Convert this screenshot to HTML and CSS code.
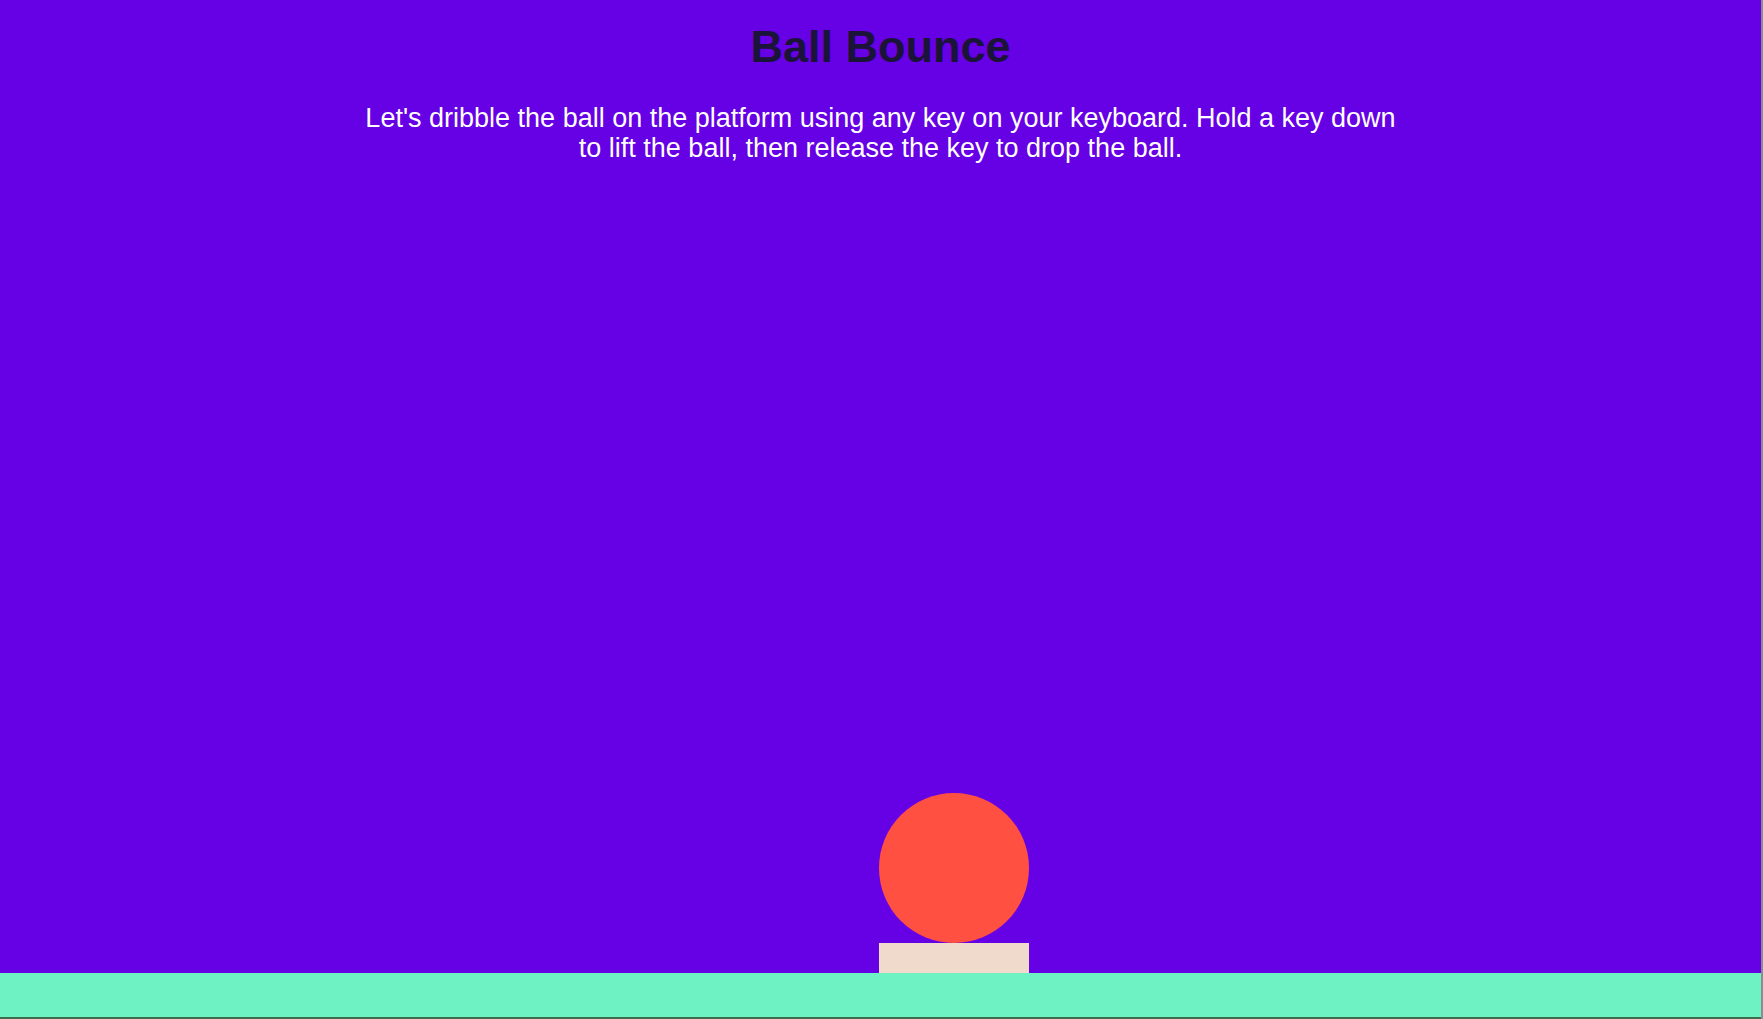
FILE: index.html
```html
<!DOCTYPE html>
<html lang="en">
<head>
<meta charset="utf-8">
<title>Ball Bounce</title>
<link rel="stylesheet" href="styles.css">
</head>
<body>
<div class="page">
  <header class="intro">
    <h1 class="title">Ball Bounce</h1>
    <p class="lead">Let's dribble the ball on the platform using any key on your keyboard. Hold a key down to lift the ball, then release the key to drop the ball.</p>
  </header>
  <main class="stage">
    <div class="player">
      <div class="ball"></div>
      <div class="platform"></div>
    </div>
  </main>
  <footer class="floor"></footer>
</div>
</body>
</html>
```
FILE: styles.css
```css
html, body {
  margin: 0;
  padding: 0;
  height: 100%;
}
body {
  font-family: "Liberation Sans", Arial, sans-serif;
  background: #6600e5;
  overflow: hidden;
}
.page {
  height: 1019px;
  display: flex;
  flex-direction: column;
  border-right: 2px solid #8d8a94;
  box-sizing: border-box;
}
.intro {
  text-align: center;
}
.title {
  margin: 22px 0 0;
  font-size: 45px;
  line-height: 49px;
  font-weight: bold;
  color: #1a1438;
}
.lead {
  margin: 32px auto 0;
  max-width: 1040px;
  font-size: 27px;
  line-height: 30px;
  color: #ffffff;
}
.stage {
  flex: 1;
  display: flex;
  flex-direction: column;
  justify-content: flex-end;
}
.player {
  margin-left: calc(50% - 2px);
  width: 150px;
  display: flex;
  flex-direction: column;
}
.ball {
  width: 150px;
  height: 150px;
  border-radius: 50%;
  background: #ff5042;
}
.platform {
  height: 30px;
  background: #efdacb;
}
.floor {
  height: 44px;
  background: #6ff2c3;
  border-bottom: 2px solid #3f6b4f;
}
```
